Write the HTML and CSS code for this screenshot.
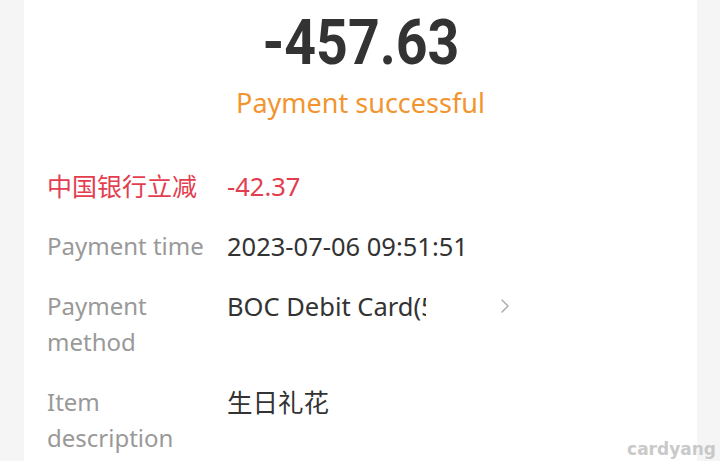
FILE: index.html
```html
<!DOCTYPE html>
<html lang="en">

<head>
    <meta charset="UTF-8">
    <meta name="viewport" content="width=device-width, initial-scale=1.0">
    <title>Payment details</title>
    <link rel="stylesheet" href="styles.css">
</head>

<body>
    <div class="card">
        <div class="amount"><span>-457.63</span></div>
        <div class="status">Payment successful</div>

        <div class="details">
            <div class="row discount">
                <div class="label">中国银行立减</div>
                <div class="value">-42.37</div>
            </div>

            <div class="row">
                <div class="label">Payment time</div>
                <div class="value">2023-07-06 09:51:51</div>
            </div>

            <div class="row">
                <div class="label">Payment<br>method</div>
                <div class="value method">
                    <span class="card-name">BOC Debit Card(5678)</span>
                    <svg class="chevron" width="10" height="16" viewBox="0 0 10 16">
                        <path d="M2 2 L8 8 L2 14" fill="none" stroke="#b0b0b0" stroke-width="1.6" stroke-linecap="round" stroke-linejoin="round" />
                    </svg>
                </div>
            </div>

            <div class="row">
                <div class="label">Item<br>description</div>
                <div class="value">生日礼花</div>
            </div>
        </div>
    </div>

    <div class="watermark">cardyang</div>
</body>

</html>
```

FILE: styles.css
```css
/* Page */
body {
    margin: 0;
    background-color: #f5f5f5;
    font-family: 'Noto Sans', 'Noto Sans CJK SC', sans-serif;
    overflow: hidden;
}

/* Receipt card */
.card {
    margin: 0 23px 0 24px;
    min-height: 100vh;
    background: #ffffff;
    padding: 11px 23px 0;
    box-sizing: border-box;
}

.amount {
    text-align: center;
    font-family: 'Roboto', sans-serif;
    font-weight: 700;
    font-size: 63px;
    line-height: 63px;
    color: #333333;
}

/* the receipt uses a condensed numeral face */
.amount span {
    display: inline-block;
    transform: scaleX(0.88);
}

.status {
    text-align: center;
    margin-top: 11px;
    font-size: 27px;
    line-height: 36px;
    color: #f29530;
}

/* Detail rows */
.details {
    margin-top: 47px;
    display: flex;
    flex-direction: column;
    gap: 24px;
}

.row {
    display: grid;
    grid-template-columns: 180px 1fr;
    font-size: 24px;
    line-height: 36px;
}

.label {
    color: #999999;
}

.value {
    color: #333333;
    font-size: 25.5px;
}

.discount .label {
    font-size: 25px;
}

.discount .label,
.discount .value {
    color: #e33d4f;
}

.method {
    display: flex;
    align-items: flex-start;
}

.card-name {
    width: 199px;
    overflow: hidden;
    white-space: nowrap;
}

.chevron {
    margin: 10px 0 0 74px;
}

/* Watermark */
.watermark {
    position: absolute;
    right: 4px;
    bottom: 2px;
    font-family: 'DejaVu Sans', sans-serif;
    font-weight: 700;
    font-size: 17px;
    color: #c9c9c9;
}
```
